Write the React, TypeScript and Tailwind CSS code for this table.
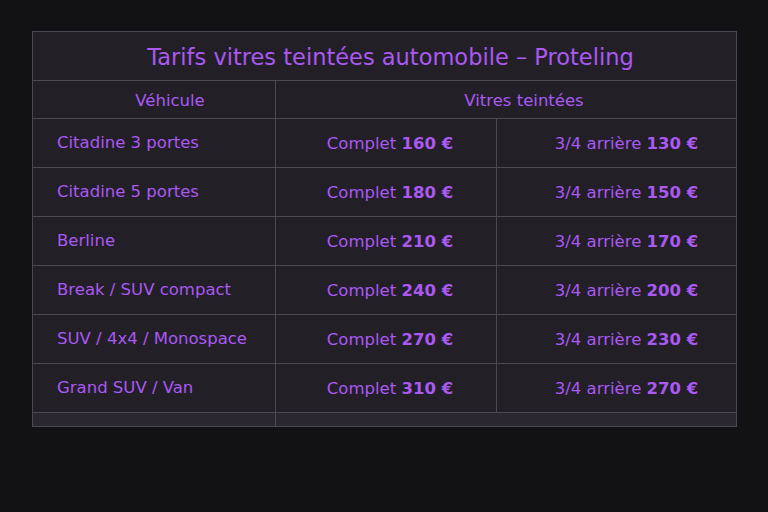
const rows = [
  { name: "Citadine 3 portes", full: "160", rear: "130" },
  { name: "Citadine 5 portes", full: "180", rear: "150" },
  { name: "Berline", full: "210", rear: "170" },
  { name: "Break / SUV compact", full: "240", rear: "200" },
  { name: "SUV / 4x4 / Monospace", full: "270", rear: "230" },
  { name: "Grand SUV / Van", full: "310", rear: "270" },
];

export default function App() {
  return (
    <div
      className="w-[768px] h-[512px] bg-[#121113] pt-[31px] pl-[32px]"
      style={{ fontFamily: "'DejaVu Sans', 'Noto Sans', sans-serif" }}
    >
      <div className="w-[705px] border border-[#4d4954] bg-[#221f26] text-[#ab58f4]">
        {/* Title */}
        <div className="h-[49px] flex items-center justify-center pl-3 pt-[3px] border-b border-[#4d4954] text-[22.5px]">
          Tarifs vitres teintées automobile – Proteling
        </div>

        {/* Header */}
        <div className="grid grid-cols-[243px_1fr] h-[38px] border-b border-[#4d4954] text-[16.5px]">
          <div className="flex items-center justify-center pl-8 pt-[3px] border-r border-[#4d4954]">Véhicule</div>
          <div className="flex items-center justify-center pl-9 pt-[3px]">Vitres teintées</div>
        </div>

        {/* Rows */}
        {rows.map((r) => (
          <div
            key={r.name}
            className="grid grid-cols-[243px_221px_1fr] h-[49px] border-b border-[#4d4954] text-[16.5px]"
          >
            <div className="flex items-center pl-6 border-r border-[#4d4954]">{r.name}</div>
            <div className="flex items-center justify-center pl-2 pt-[3px] border-r border-[#4d4954]">
              Complet&nbsp;<span className="font-bold">{r.full} €</span>
            </div>
            <div className="flex items-center justify-center pl-5 pt-[3px]">
              3/4 arrière&nbsp;<span className="font-bold">{r.rear} €</span>
            </div>
          </div>
        ))}

        {/* Empty footer row */}
        <div className="grid grid-cols-[243px_1fr] h-[13px] bg-[#2a2730]">
          <div className="border-r border-[#4d4954]" />
          <div />
        </div>
      </div>
    </div>
  );
}
